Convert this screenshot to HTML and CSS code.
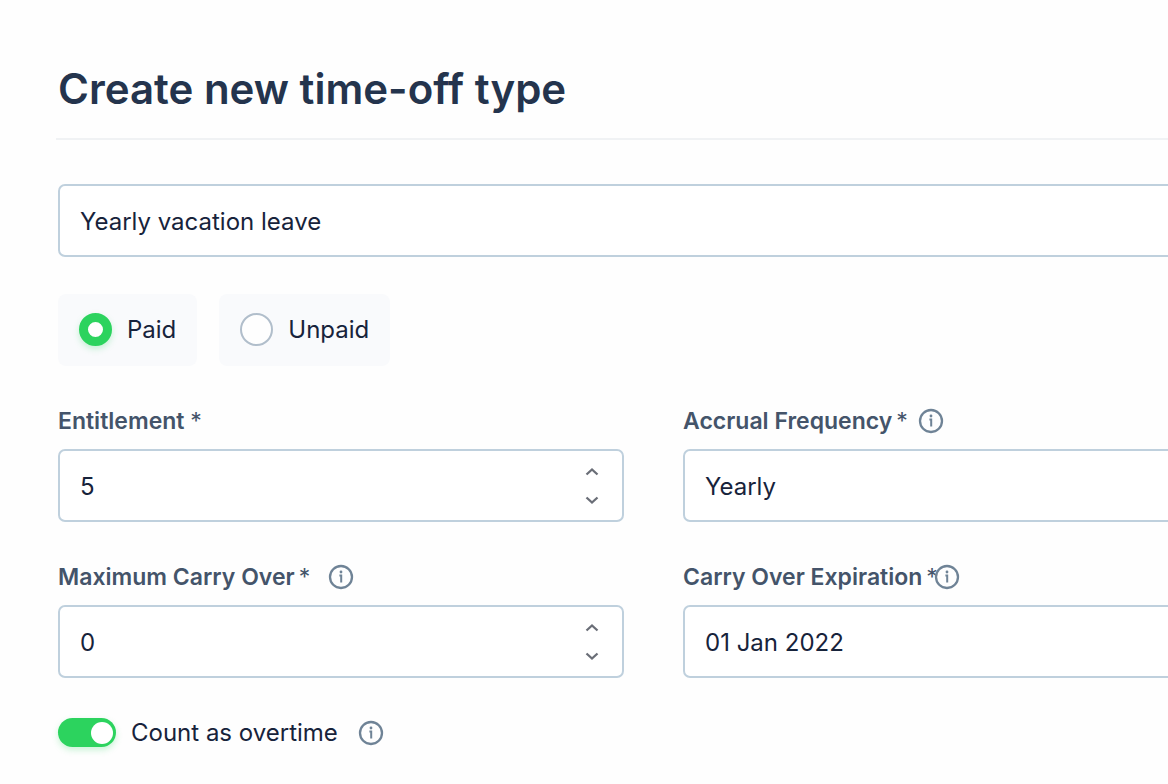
FILE: index.html
```html
<!DOCTYPE html>
<html lang="en">
<head>
<meta charset="utf-8">
<meta name="viewport" content="width=device-width, initial-scale=1">
<title>Create new time-off type</title>
<link rel="stylesheet" href="styles.css">
</head>
<body>
<svg class="sprite" aria-hidden="true">
  <symbol id="info" viewBox="0 0 26 26">
    <circle cx="13" cy="13" r="11" fill="none" stroke="currentColor" stroke-width="2.3"/>
    <circle cx="13" cy="8" r="1.4" fill="currentColor"/>
    <path d="M11.4 11.6H13.2V18.4" fill="none" stroke="currentColor" stroke-width="2"/>
  </symbol>
  <symbol id="up" viewBox="0 0 14 10">
    <path d="M1.5 7.5L7 2.5L12.5 7.5" fill="none" stroke="currentColor" stroke-width="2.3"/>
  </symbol>
  <symbol id="down" viewBox="0 0 14 10">
    <path d="M1.5 2.5L7 7.5L12.5 2.5" fill="none" stroke="currentColor" stroke-width="2.3"/>
  </symbol>
</svg>
<div class="viewport">
<main class="page">
  <header class="header">
    <h1 class="title">Create new time-off type</h1>
  </header>
  <form class="form">
    <input class="control" type="text" aria-label="Time-off type name" value="Yearly vacation leave">

    <div class="choices" role="radiogroup" aria-label="Payment">
      <label class="choice"><input class="radio" type="radio" name="payment" checked>Paid</label>
      <label class="choice"><input class="radio" type="radio" name="payment">Unpaid</label>
    </div>

    <div class="fields">
      <div class="field">
        <div class="field-head">
          <label class="label" for="entitlement">Entitlement <span class="star">*</span></label>
        </div>
        <div class="number">
          <input class="control" id="entitlement" type="number" value="5">
          <div class="stepper">
            <button class="step" type="button" aria-label="Increase entitlement"><svg class="chevron"><use href="#up"/></svg></button>
            <button class="step" type="button" aria-label="Decrease entitlement"><svg class="chevron"><use href="#down"/></svg></button>
          </div>
        </div>
      </div>
      <div class="field">
        <div class="field-head">
          <label class="label" for="frequency">Accrual Frequency<span class="star star-near">*</span></label>
          <button class="info" type="button" aria-label="About accrual frequency"><svg class="info-icon"><use href="#info"/></svg></button>
        </div>
        <select class="control" id="frequency"><option>Yearly</option></select>
      </div>
      <div class="field">
        <div class="field-head field-head-wide">
          <label class="label" for="carry">Maximum Carry Over<span class="star star-near">*</span></label>
          <button class="info" type="button" aria-label="About maximum carry over"><svg class="info-icon"><use href="#info"/></svg></button>
        </div>
        <div class="number">
          <input class="control" id="carry" type="number" value="0">
          <div class="stepper">
            <button class="step" type="button" aria-label="Increase carry over"><svg class="chevron"><use href="#up"/></svg></button>
            <button class="step" type="button" aria-label="Decrease carry over"><svg class="chevron"><use href="#down"/></svg></button>
          </div>
        </div>
      </div>
      <div class="field">
        <div class="field-head field-head-tight">
          <label class="label" for="expiration">Carry Over Expiration<span class="star star-near">*</span></label>
          <button class="info" type="button" aria-label="About carry over expiration"><svg class="info-icon"><use href="#info"/></svg></button>
        </div>
        <input class="control" id="expiration" type="text" value="01 Jan 2022">
      </div>
    </div>

    <div class="overtime">
      <label class="toggle"><input class="switch" type="checkbox" role="switch" checked>Count as overtime</label>
      <button class="info" type="button" aria-label="About overtime"><svg class="info-icon"><use href="#info"/></svg></button>
    </div>
  </form>
</main>
</div>
</body>
</html>
```
FILE: styles.css
```css
* {
  box-sizing: border-box;
}

body {
  margin: 0;
  background: #fefefe;
  color: #17233b;
  font-family: Inter, "Liberation Sans", sans-serif;
  font-size: 24px;
  line-height: 33px;
}

.sprite {
  display: none;
}

.viewport {
  overflow: hidden;
}

/* The form runs past the right edge of the window. */
.page {
  margin-right: -81px;
  padding: 62px 0 32px 58px;
}

.header {
  margin-left: -2px;
  padding: 0 0 22px 2px;
  border-bottom: 2px solid #f0f2f4;
}

.title {
  margin: 0;
  color: #24344d;
  font-size: 42px;
  font-weight: 600;
  line-height: 54px;
}

.form {
  padding-top: 44px;
}

.control {
  display: block;
  width: 100%;
  margin: 0;
  padding: 19px 20px 17px;
  border: 2px solid #bfd0dd;
  border-radius: 7px;
  background: #fff;
  color: inherit;
  font: inherit;
  appearance: none;
}

.control[type="number"] {
  appearance: textfield;
}

.control::-webkit-inner-spin-button {
  appearance: none;
  margin: 0;
}

.choices {
  display: flex;
  gap: 22px;
  margin-top: 37px;
}

.choice {
  display: flex;
  align-items: center;
  gap: 15px;
  padding: 19px 21px 20px;
  border-radius: 8px;
  background: #f9fafc;
}

.radio {
  width: 33px;
  height: 33px;
  margin: 0;
  border: 2px solid #b1becb;
  border-radius: 50%;
  background: #fefefe;
  appearance: none;
}

.radio:checked {
  border: 9px solid #2cd35e;
  box-shadow: 0 3px 6px #2cd35e40;
}

.fields {
  display: grid;
  grid-template-columns: 1fr 1fr;
  gap: 42px 59px;
  margin-top: 42px;
}

.field-head {
  display: flex;
  align-items: center;
  gap: 10px;
  height: 26px;
  margin-bottom: 15px;
}

.field-head-wide {
  gap: 18px;
}

.field-head-tight {
  gap: 0;
}

.field-head-tight .info {
  margin-left: -4px;
}

.label {
  color: #44546a;
  font-size: 23px;
  font-weight: 600;
}

.star {
  font-weight: 400;
}

.star-near {
  margin-left: 4px;
}

.info {
  display: flex;
  padding: 0;
  border: 0;
  background: none;
  color: #6f8396;
}

.info-icon {
  width: 26px;
  height: 26px;
}

.number {
  display: grid;
  align-items: center;
}

.number > * {
  grid-area: 1 / 1;
}

.stepper {
  display: grid;
  gap: 8px;
  justify-self: end;
  margin-right: 22px;
}

.step {
  display: grid;
  place-items: center;
  width: 20px;
  height: 20px;
  padding: 0;
  border: 0;
  background: none;
  color: #6a6e77;
}

.chevron {
  width: 14px;
  height: 10px;
}

.overtime {
  display: flex;
  align-items: center;
  gap: 20px;
  margin-top: 38px;
}

.toggle {
  display: flex;
  align-items: center;
  gap: 15px;
}

.switch {
  display: flex;
  align-items: center;
  width: 58px;
  height: 29px;
  margin: 0;
  padding: 0 3px;
  border-radius: 15px;
  background: #b1becb;
  appearance: none;
}

.switch::before {
  width: 22px;
  height: 22px;
  border-radius: 50%;
  background: #fff;
  content: "";
}

.switch:checked {
  justify-content: flex-end;
  background: #2cd35e;
  box-shadow: 0 3px 6px #2cd35e40;
}
```
